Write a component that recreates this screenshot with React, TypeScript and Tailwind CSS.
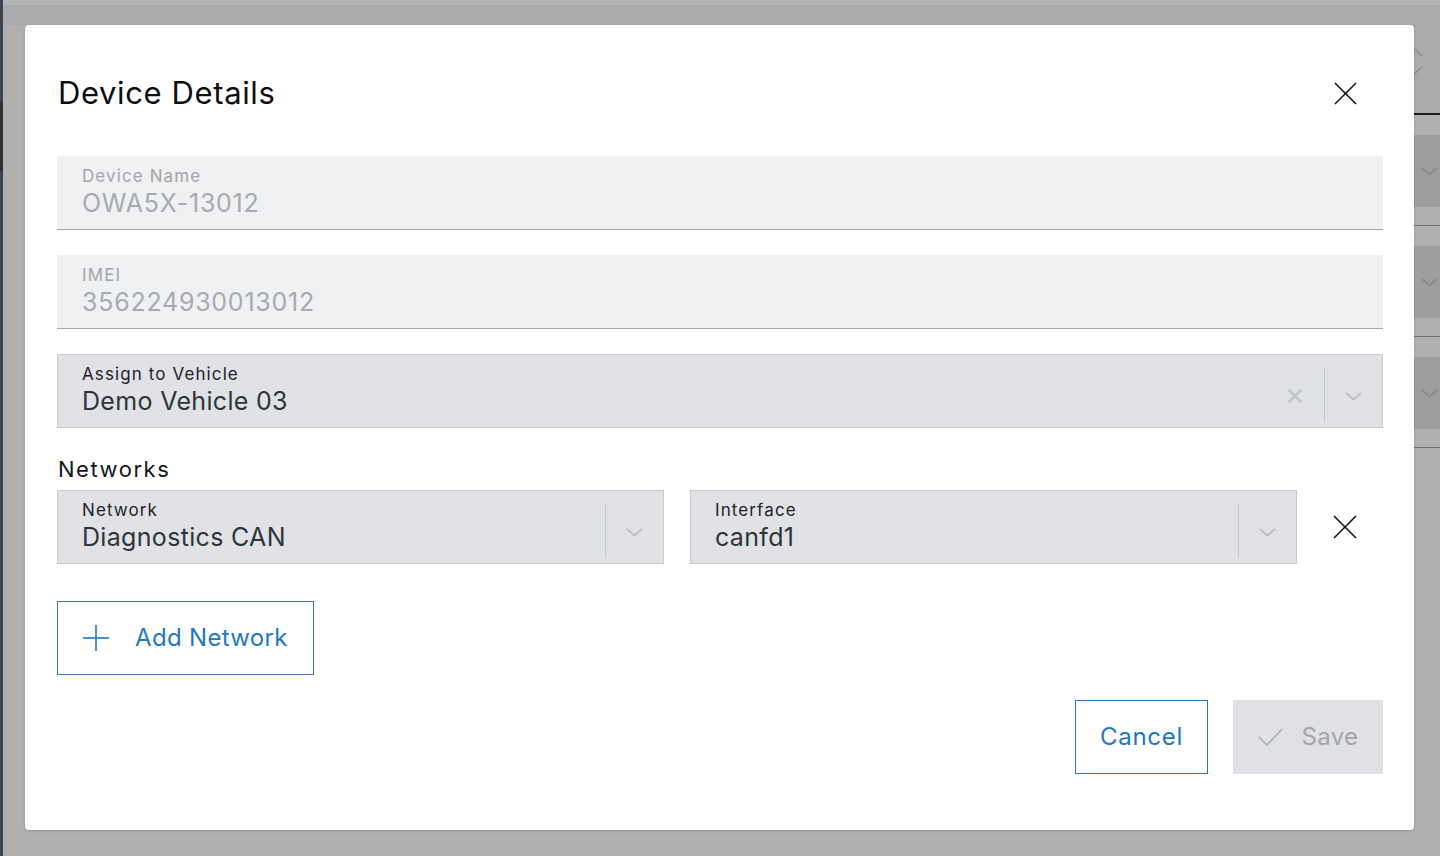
import type { ReactNode } from "react";

function XIcon({ size = 24, strokeWidth = 1.6, className = "" }: { size?: number; strokeWidth?: number; className?: string }) {
  return (
    <svg width={size} height={size} viewBox="0 0 24 24" fill="none" stroke="currentColor" strokeWidth={strokeWidth} className={className}>
      <line x1="1" y1="1" x2="23" y2="23" />
      <line x1="23" y1="1" x2="1" y2="23" />
    </svg>
  );
}

function ChevronDown({ className = "" }: { className?: string }) {
  return (
    <svg width="17" height="9" viewBox="0 0 17 9" fill="none" stroke="currentColor" strokeWidth="2" className={className}>
      <polyline points="1,1 8.5,7.5 16,1" />
    </svg>
  );
}

function PlusIcon() {
  return (
    <svg width="26" height="26" viewBox="0 0 26 26" fill="none" stroke="currentColor" strokeWidth="1.6">
      <line x1="13" y1="0" x2="13" y2="26" />
      <line x1="0" y1="13" x2="26" y2="13" />
    </svg>
  );
}

function CheckIcon() {
  return (
    <svg width="25" height="18" viewBox="0 0 25 18" fill="none" stroke="currentColor" strokeWidth="1.6">
      <polyline points="1,9 9,17 24,1" />
    </svg>
  );
}

function ReadonlyField({ label, value }: { label: string; value: string }) {
  return (
    <div className="h-[74px] bg-[#eff1f2] border-b border-[#a3a7ab] px-[25px] pt-[10px]">
      <div className="text-[17px] leading-[20px] tracking-[0.065em] text-[#a2a6aa]">{label}</div>
      <div className="mt-[3px] text-[25px] leading-[28px] tracking-[0.03em] text-[#a7abaf]">{value}</div>
    </div>
  );
}

function SelectField({ label, value, clearable = false, className = "" }: { label: string; value: string; clearable?: boolean; className?: string }) {
  return (
    <div className={`flex h-[74px] bg-[#e0e2e5] border border-[#c9cbce] ${className}`}>
      <div className="flex-1 min-w-0 px-[24px] pt-[9px]">
        <div className="text-[17px] leading-[20px] tracking-[0.065em] text-[#1d2329]">{label}</div>
        <div className="mt-[3px] text-[25px] leading-[28px] text-[#2e353b]">{value}</div>
      </div>
      {clearable && (
        <div className="w-[58px] flex justify-center pt-[34px] text-[#c2c5c8]">
          <XIcon size={14} strokeWidth={4.6} />
        </div>
      )}
      <div className="w-px bg-[#c6c9cc] mt-[13px] mb-[5px]" />
      <div className="w-[57px] flex justify-center pt-[37px] text-[#bcbfc3]">
        <ChevronDown />
      </div>
    </div>
  );
}

function Button({ children, variant, className = "" }: { children: ReactNode; variant: "outline" | "disabled"; className?: string }) {
  const styles =
    variant === "outline"
      ? "border border-[#2a78bf] text-[#1f78c0] bg-white"
      : "bg-[#dfe1e4] text-[#a3a6a9]";
  return (
    <button className={`h-[74px] flex items-center justify-center gap-[19px] text-[24px] ${styles} ${className}`}>{children}</button>
  );
}

// rows of the page sitting behind the dialog
function BackdropRow() {
  return (
    <div className="pt-[20px] pb-[18px] border-b border-[#6f6f6f]">
      <div className="h-[72px] bg-[#9d9e9f] flex items-center justify-end pr-[2px] text-[#8a8b8d]">
        <ChevronDown />
      </div>
    </div>
  );
}

export default function App() {
  return (
    <div className="relative w-[1440px] h-[856px] overflow-hidden bg-[#b0b0b0] font-[Inter,_'Liberation_Sans',_sans-serif] tracking-[0.02em]">
      {/* page underneath */}
      <div className="flex h-full">
        <div className="w-[3px] bg-[#3b434b] flex flex-col">
          <div className="mt-[102px] h-[69px] bg-[#2a3238]" />
        </div>
        <div className="flex-1 flex flex-col">
          <div className="h-[5px] bg-[#b5b5b5]" />
          <div className="h-[20px] bg-[#a9aaab]" />
          <div className="flex">
            <div className="flex-1" />
            <div className="w-[420px]">
              <div className="h-[90px] bg-[#a9aaab] border-b-2 border-[#1c1c1c] pl-[392px] pt-[22px] text-[#8c8d8f]">
                <svg width="14" height="32" viewBox="0 0 14 32" fill="none" stroke="currentColor" strokeWidth="1.5">
                  <polyline points="1,1 10,9" />
                  <polyline points="10,20 1,28" />
                </svg>
              </div>
              <BackdropRow />
              <BackdropRow />
              <BackdropRow />
            </div>
          </div>
        </div>
      </div>

      {/* dialog */}
      <div className="absolute left-[25px] top-[25px] w-[1389px] h-[805px] bg-white rounded-[4px] shadow-[0_1px_3px_rgba(0,0,0,0.15)] pl-[32px] pr-[31px] pt-[40px]">
        <div className="flex items-center justify-between h-[56px]">
          <h2 className="text-[31px] leading-[36px] tracking-[0.02em] text-[#0b0f12] pl-[1px]">Device Details</h2>
          <button className="mr-[26px] text-[#111]">
            <XIcon size={23} strokeWidth={1.6} />
          </button>
        </div>

        <div className="mt-[35px] flex flex-col gap-[25px]">
          <ReadonlyField label="Device Name" value="OWA5X-13012" />
          <ReadonlyField label="IMEI" value="356224930013012" />
          <SelectField label="Assign to Vehicle" value="Demo Vehicle 03" clearable />
        </div>

        <h3 className="mt-[27px] text-[22px] leading-[28px] tracking-[0.07em] text-[#12171b] pl-[1px]">Networks</h3>
        <div className="mt-[7px] flex items-center gap-[26px]">
          <SelectField label="Network" value="Diagnostics CAN" className="w-[607px]" />
          <SelectField label="Interface" value="canfd1" className="w-[607px]" />
          <div className="flex-1 flex justify-end pr-[26px] text-[#111]">
            <XIcon size={24} strokeWidth={1.6} />
          </div>
        </div>

        <div className="mt-[37px]">
          <button className="h-[74px] flex items-center gap-[26px] px-[25px] border border-[#4772b3] text-[#1f78c0] text-[24px]">
            <PlusIcon />
            <span>Add Network</span>
          </button>
        </div>

        <div className="mt-[25px] flex justify-end gap-[25px]">
          <Button variant="outline" className="w-[133px]">
            <span className="tracking-[0.03em]">Cancel</span>
          </Button>
          <Button variant="disabled" className="w-[150px]">
            <span className="text-[#a9acaf]">
              <CheckIcon />
            </span>
            <span>Save</span>
          </Button>
        </div>
      </div>
    </div>
  );
}
